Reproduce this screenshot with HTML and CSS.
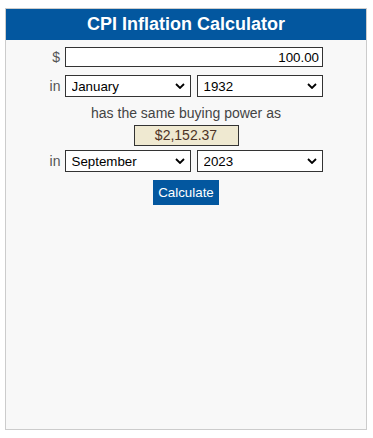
FILE: index.html
```html
<!DOCTYPE html>
<html lang="en">
  <head>
    <meta charset="UTF-8" />
    <meta name="viewport" content="width=device-width, initial-scale=1.0" />
    <title>CPI Inflation Calculator</title>
    <link rel="stylesheet" href="styles.css">
  </head>
  <body>
    <div class="calc">
      <h1 class="calc-title">CPI Inflation Calculator</h1>

      <div class="row row-amount">
        <label class="lbl" for="amount">$</label>
        <input type="text" id="amount" class="amount" value="100.00" />
      </div>

      <div class="row row-from">
        <label class="lbl" for="from-month">in</label>
        <select id="from-month" class="pick">
          <option>January</option>
        </select>
        <select id="from-year" class="pick">
          <option>1932</option>
        </select>
      </div>

      <p class="same">has the same buying power as</p>
      <div class="result-wrap">
        <span class="result">$2,152.37</span>
      </div>

      <div class="row row-to">
        <label class="lbl" for="to-month">in</label>
        <select id="to-month" class="pick">
          <option>September</option>
        </select>
        <select id="to-year" class="pick">
          <option>2023</option>
        </select>
      </div>

      <div class="actions">
        <button class="calc-btn">Calculate</button>
      </div>
    </div>
  </body>
</html>
```

FILE: styles.css
```css
body {
  margin: 0;
  background-color: #fff;
  font-family: "Liberation Sans", Arial, sans-serif;
}
.calc {
  box-sizing: border-box;
  width: 362px;
  height: 422px;
  margin: 8px 0 0 5px;
  border: 1px solid #ccc;
  background-color: #f8f8f8;
}
.calc-title {
  margin: 0;
  height: 31px;
  line-height: 31px;
  background-color: #03579f;
  color: #fff;
  font-size: 18px;
  font-weight: bold;
  text-align: center;
}
.row {
  display: flex;
  justify-content: center;
  align-items: center;
  gap: 4px;
}
.row-amount {
  margin-top: 7px;
}
.row-from {
  margin-top: 8px;
}
.row-to {
  margin-top: 4px;
}
.lbl {
  width: 11px;
  text-align: right;
  font-size: 14px;
  color: #555;
}
.amount {
  box-sizing: border-box;
  width: 258px;
  height: 20px;
  margin: 0 0 0 1px;
  padding: 0 3px;
  border: 1px solid #333;
  border-radius: 0;
  background: #fff;
  font-family: "Liberation Sans", Arial, sans-serif;
  font-size: 13.33px;
  color: #000;
  text-align: right;
}
.pick {
  box-sizing: border-box;
  width: 126px;
  height: 22px;
  margin: 0;
  padding: 0 18px 0 6px;
  border: 1px solid #333;
  border-radius: 0;
  appearance: none;
  -webkit-appearance: none;
  background: #fff url("data:image/svg+xml,%3Csvg xmlns='http://www.w3.org/2000/svg' width='10' height='6' viewBox='0 0 10 6'%3E%3Cpath d='M1 1l4 4 4-4' fill='none' stroke='%23000' stroke-width='1.8'/%3E%3C/svg%3E") no-repeat right 5px center;
  font-family: "Liberation Sans", Arial, sans-serif;
  font-size: 13.33px;
  color: #000;
}
.pick + .pick {
  margin-left: 2px;
}
.same {
  margin: 8px 0 0;
  line-height: 16px;
  font-size: 14px;
  color: #444;
  text-align: center;
}
.result-wrap {
  margin-top: 4px;
  text-align: center;
  height: 21px;
}
.result {
  box-sizing: border-box;
  display: inline-block;
  width: 105px;
  height: 21px;
  line-height: 19px;
  border: 1px solid #333;
  background-color: #efe9d1;
  font-size: 14px;
  color: #4d3326;
}
.actions {
  margin-top: 8px;
  text-align: center;
}
.calc-btn {
  height: 25px;
  padding: 0 5px;
  border: none;
  background-color: #03579f;
  color: #fff;
  font-family: "Liberation Sans", Arial, sans-serif;
  font-size: 13.33px;
}
```
